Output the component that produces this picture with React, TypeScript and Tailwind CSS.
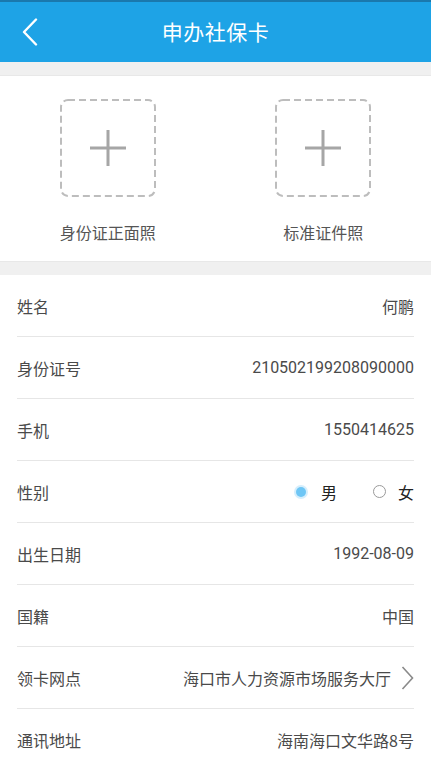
import React, { JSX } from 'react';

const font = { fontFamily: '"Noto Sans CJK SC", "Noto Sans", Roboto, sans-serif' };

const UploadBox = ({ label }: { label: string }): JSX.Element => (
    <div className="flex flex-col items-center">
        <svg width="96" height="98" viewBox="0 0 96 98">
            <rect x="1" y="1" width="94" height="96" rx="7" fill="none" stroke="#bdbdbd" strokeWidth="2" strokeDasharray="7 4" />
            <path d="M48 31v36M30 49h36" stroke="#a6a6a6" strokeWidth="3" />
        </svg>
        <div className="mt-[24px] text-[16px] leading-[22px] text-[#555]">{label}</div>
    </div>
);

const Row = ({ label, children, last }: { label: string; children: React.ReactNode; last?: boolean }): JSX.Element => (
    <div className={`flex h-[62px] items-center justify-between ${last ? '' : 'border-b border-[#e6e6e6]'}`}>
        <span className="text-[16px] text-[#4a4a4a]">{label}</span>
        <div className="flex items-center text-[16px] text-[#4a4a4a]">{children}</div>
    </div>
);

const App = (): JSX.Element => {
    return (
        <div className="w-[431px] h-[768px] overflow-hidden bg-[#f0f0f0]" style={font}>
            {/* Header */}
            <header className="relative flex h-[62px] items-center justify-center border-t-2 border-[#1a78ad] bg-[#1ea3e6]">
                <svg className="absolute left-[22px] top-[16px]" width="16" height="28" viewBox="0 0 16 28">
                    <path d="M14 1.5L2 14l12 12.5" fill="none" stroke="#fff" strokeWidth="2.4" strokeLinecap="round" strokeLinejoin="round" />
                </svg>
                <h1 className="text-[21px] font-normal tracking-[0.5px] text-white">申办社保卡</h1>
            </header>

            <div className="h-[14px] border-b border-[#e8e8e8]" />

            {/* Photo uploads */}
            <section className="grid h-[185px] grid-cols-2 bg-white pt-[23px]">
                <UploadBox label="身份证正面照" />
                <UploadBox label="标准证件照" />
            </section>

            <div className="h-[14px] border-t border-[#e8e8e8]" />

            {/* Form rows */}
            <section className="bg-white px-[17px]">
                <Row label="姓名">何鹏</Row>
                <Row label="身份证号"><span style={{ fontFamily: 'Roboto, sans-serif' }}>210502199208090000</span></Row>
                <Row label="手机"><span style={{ fontFamily: 'Roboto, sans-serif' }}>1550414625</span></Row>
                <Row label="性别">
                    <span className="flex h-[14px] w-[14px] items-center justify-center rounded-full bg-[#d5eefc]">
                        <span className="h-[10px] w-[10px] rounded-full bg-[#6ec6f5]" />
                    </span>
                    <span className="ml-[13px] text-[#222]">男</span>
                    <span className="ml-[36px] h-[13px] w-[13px] rounded-full border-[1.5px] border-[#9a9a9a]" />
                    <span className="ml-[12px] text-[#222]">女</span>
                </Row>
                <Row label="出生日期"><span style={{ fontFamily: 'Roboto, sans-serif' }}>1992-08-09</span></Row>
                <Row label="国籍">中国</Row>
                <Row label="领卡网点">
                    <span>海口市人力资源市场服务大厅</span>
                    <svg className="ml-[10px]" width="13" height="24" viewBox="0 0 13 24">
                        <path d="M1.5 1l10 11-10 11" fill="none" stroke="#8a8a8a" strokeWidth="1.6" />
                    </svg>
                </Row>
                <Row label="通讯地址" last>海南海口文华路8号</Row>
            </section>
        </div>
    );
};

export default App;
